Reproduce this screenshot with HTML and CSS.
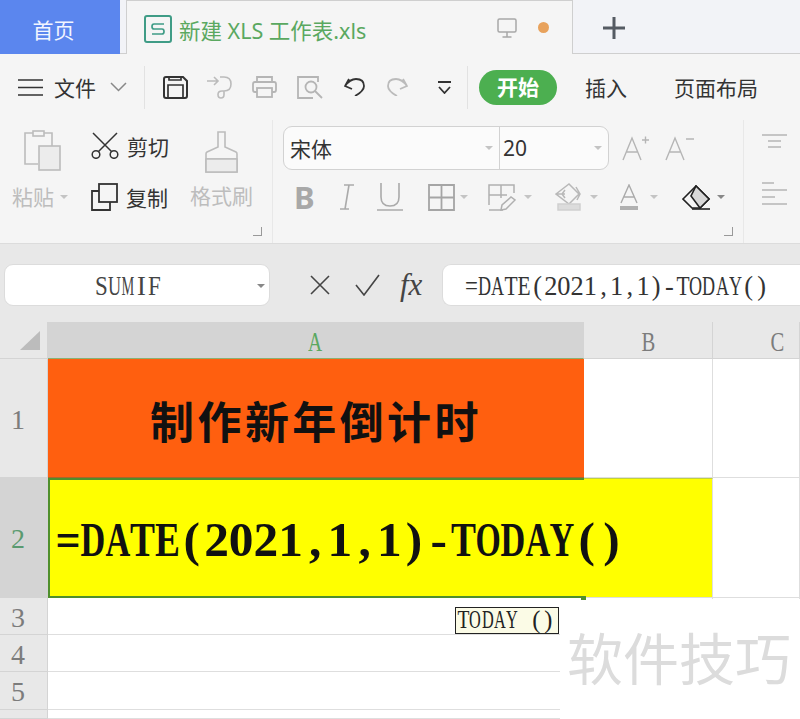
FILE: index.html
```html
<!DOCTYPE html>
<html lang="zh-CN">
<head>
    <meta charset="UTF-8">
    <title>新建 XLS 工作表.xls</title>
    <link rel="stylesheet" href="styles.css">
</head>
<body>
    <!-- window tabs -->
    <div class="tabbar">
        <div class="tab-home">首页</div>
        <div class="tab-doc">
            <svg class="doc-logo" width="28" height="28" viewBox="0 0 28 28" fill="none" stroke="#3f9c86" stroke-width="2"><rect x="1" y="1" width="26" height="26" rx="2"/><path d="M20 9H10q-2 0-2 2.500t2 2.500h8q2 0 2 2.500t-2 2.500H8" stroke-width="1.700"/></svg>
            <span class="doc-name">新建 XLS 工作表.xls</span>
            <svg class="doc-monitor" width="20" height="20" viewBox="0 0 20 20" fill="none" stroke="#a8a8a8" stroke-width="1.500"><rect x="1" y="1" width="18" height="13" rx="1.500"/><path d="M10 14v5M5.500 19h9"/></svg>
            <span class="doc-dot"></span>
        </div>
        <svg class="tab-plus" width="22" height="22" viewBox="0 0 22 22" stroke="#555b63" stroke-width="3"><path d="M11 0v22M0 11h22"/></svg>
    </div>

    <!-- file menu, quick access, ribbon tabs -->
    <div class="menubar">
        <svg class="m-burger" width="25" height="17" viewBox="0 0 25 17" stroke="#333" stroke-width="1.600"><path d="M0 1h25M0 8.500h25M0 16h25"/></svg>
        <span class="m-file">文件</span>
        <svg class="m-chevron" width="17" height="10" viewBox="0 0 17 10" fill="none" stroke="#888" stroke-width="1.500"><path d="M1 1l7.500 7.500L16 1"/></svg>
        <span class="m-sep m-sep-a"></span>
        <svg class="m-save" width="25" height="23" viewBox="0 0 25 23" fill="none" stroke="#333" stroke-width="2"><path d="M3 1h17l4 4v15q0 2-2 2H3q-2 0-2-2V3q0-2 2-2z"/><path d="M5 22V9h15v13M6 1v3h12V1" stroke-width="1.700"/></svg>
        <svg class="m-share" width="25" height="23" viewBox="0 0 25 23" fill="none" stroke="#bbb" stroke-width="1.600"><path d="M0 5h10M7 1l4 4-4 4M13 1h4q7 0 7 7t-7 7h-2q-4 0-4 3.500t3 3.500 3-3.500v-3"/></svg>
        <svg class="m-print" width="25" height="22" viewBox="0 0 25 22" fill="none" stroke="#b5b5b5" stroke-width="1.800"><path d="M5 6V1h15v5M5 16H3q-2 0-2-2V8q0-2 2-2h19q2 0 2 2v6q0 2-2 2h-2"/><rect x="5" y="12" width="15" height="9"/></svg>
        <svg class="m-preview" width="26" height="23" viewBox="0 0 26 23" fill="none" stroke="#b5b5b5" stroke-width="1.800"><path d="M21 6V1H1v21h15"/><circle cx="14" cy="11" r="5.500"/><path d="M18 15l7 7"/></svg>
        <svg class="m-undo" width="21" height="18" viewBox="0 0 21 18" fill="none" stroke="#333" stroke-width="1.800"><path d="M5 1L1 8l7 3M1 8Q6 1 12 1q8 0 8 7 0 5-9 10"/></svg>
        <svg class="m-redo" width="21" height="18" viewBox="0 0 21 18" fill="none" stroke="#bbb" stroke-width="1.800"><path d="M16 1l4 7-7 3M20 8Q15 1 9 1 1 1 1 8q0 5 9 10"/></svg>
        <svg class="m-more" width="15" height="13" viewBox="0 0 15 13" fill="none" stroke="#333" stroke-width="1.800"><path d="M1 1h13M2 6l5.500 6L13 6"/></svg>
        <span class="m-sep m-sep-b"></span>
        <span class="m-start">开始</span>
        <span class="m-tab m-insert">插入</span>
        <span class="m-tab m-layout">页面布局</span>
    </div>

    <!-- ribbon -->
    <div class="ribbon">
        <div class="group group-clip">
            <div class="paste">
                <svg class="paste-icon" width="37" height="41" viewBox="0 0 37 41" fill="none" stroke="#bcbcbc" stroke-width="1.600"><path d="M14 34H1V3h27v13"/><rect x="9" y="1" width="11" height="5" fill="#f5f5f5"/><rect x="15" y="16" width="21" height="24" fill="#ececec"/></svg>
                <span class="paste-label">粘贴<i class="caret caret-light"></i></span>
            </div>
            <div class="cutcopy">
                <div class="small-btn">
                    <svg width="28" height="27" viewBox="0 0 28 27" fill="none" stroke="#333" stroke-width="1.500"><path d="M2 1l19 19M26 1L7 20"/><circle cx="5" cy="22.500" r="3.800"/><circle cx="23" cy="22.500" r="3.800"/></svg>
                    <span>剪切</span>
                </div>
                <div class="small-btn">
                    <svg width="27" height="28" viewBox="0 0 27 28" fill="none" stroke="#333" stroke-width="1.800"><path d="M8 8H1v19h18v-8"/><rect x="8" y="1" width="18" height="18" fill="#f5f5f5"/></svg>
                    <span>复制</span>
                </div>
            </div>
            <div class="brush">
                <svg width="33" height="42" viewBox="0 0 33 42" fill="none" stroke="#bcbcbc" stroke-width="1.600"><path d="M13 1h7v15l11 5q1 .5 1 2v18H1V23q0-1.500 1-2l11-5zM1 28h31"/><path d="M1 28h31v13H1z" fill="#ececec"/></svg>
                <span>格式刷</span>
            </div>
            <span class="launcher"></span>
        </div>

        <div class="group group-font">
            <div class="font-col">
                <div class="font-top">
                    <div class="font-box">
                        <div class="font-name">宋体<i class="caret caret-light"></i></div>
                        <div class="font-size">20<i class="caret caret-light"></i></div>
                    </div>
                    <svg class="grow" width="28" height="26" viewBox="0 0 28 26" fill="none" stroke="#b5b5b5" stroke-width="1.400"><path d="M1 25L10 3l9 22M4.500 17h11M20 5h7M23.500 1.500v7"/></svg>
                    <svg class="shrink" width="30" height="26" viewBox="0 0 30 26" fill="none" stroke="#b5b5b5" stroke-width="1.400"><path d="M1 25L10 3l9 22M4.500 17h11M21 4h8"/></svg>
                </div>
                <div class="font-tools">
                    <b class="t-bold">B</b>
                    <svg class="t-italic" width="16" height="26" viewBox="0 0 16 26" fill="none" stroke="#aaa" stroke-width="1.600"><path d="M5 1h10M1 25h9M10 1L6 25"/></svg>
                    <svg class="t-under" width="26" height="28" viewBox="0 0 26 28" fill="none" stroke="#aaa" stroke-width="1.600"><path d="M4 0v14q0 9 9 9t9-9V0M0 27h26"/></svg>
                    <svg class="t-grid" width="27" height="27" viewBox="0 0 27 27" fill="none" stroke="#a5a5a5" stroke-width="1.800"><path d="M1 1h25v25H1zM13.500 1v25M1 13.500h25"/></svg>
                    <i class="caret caret-light c-grid"></i>
                    <svg class="t-bordpen" width="28" height="27" viewBox="0 0 28 27" fill="none" stroke="#b0b0b0" stroke-width="1.500"><path d="M1 21V1h25v8M1 11h18M13 1v13M1 26h14"/><path d="M13 26l1-5 9-8 4 3-9 9z"/></svg>
                    <i class="caret caret-light c-bordpen"></i>
                    <svg class="t-fill" width="29" height="28" viewBox="0 0 29 28" fill="none" stroke="#b8b8b8" stroke-width="1.500"><path d="M1 11L14 1l10 10-10 10zM1 11h9M10 7l-3 4 3 4M21 4l4 7-3 6"/><path d="M3 21h22v6H3z" fill="#dcdcdc" stroke="#d0d0d0"/></svg>
                    <i class="caret caret-light c-fill"></i>
                    <svg class="t-color" width="20" height="27" viewBox="0 0 20 27" fill="none" stroke="#aaa" stroke-width="1.400"><path d="M2 19L10 1l8 18M5 13h10"/><path d="M1 22h18v4H1z" fill="#b0b0b0" stroke="none"/></svg>
                    <i class="caret caret-light c-color"></i>
                    <svg class="t-eraser" width="29" height="25" viewBox="0 0 29 25" fill="none" stroke="#222" stroke-width="1.600"><path d="M1 14L14 1l13 13-9 9H10z"/><path d="M14 1l13 13-9 9-9-12z" fill="#d8d8d8"/><path d="M10 24h18"/></svg>
                    <i class="caret c-eraser"></i>
                </div>
            </div>
            <span class="launcher"></span>
        </div>

        <div class="group group-align">
            <svg width="25" height="14" viewBox="0 0 25 14" stroke="#b5b5b5" stroke-width="1.500"><path d="M0 1h25M6 7h13M6 13h13"/></svg>
            <svg width="25" height="23" viewBox="0 0 25 23" stroke="#b5b5b5" stroke-width="1.500"><path d="M0 1h12M0 8h25M0 15h13M0 22h25"/></svg>
        </div>
    </div>

    <!-- name box and formula input -->
    <div class="formulabar">
        <div class="name-box"><span class="half">SUMIF</span><i class="caret"></i></div>
        <svg class="f-cancel" width="20" height="20" viewBox="0 0 20 20" stroke="#444" stroke-width="1.600"><path d="M1 1l18 18M19 1L1 19"/></svg>
        <svg class="f-accept" width="25" height="22" viewBox="0 0 25 22" fill="none" stroke="#444" stroke-width="1.600"><path d="M1 11l8 10L24 1"/></svg>
        <span class="f-fx">fx</span>
        <div class="formula-input"><span class="half">=DATE(2021,1,1)-TODAY()</span></div>
    </div>

    <!-- worksheet -->
    <div class="sheet">
        <div class="corner"><span class="corner-mark"></span></div>
        <div class="col-head col-active"><span class="half">A</span></div>
        <div class="col-head"><span class="half">B</span></div>
        <div class="col-head col-cut"><span class="half">C</span></div>

        <div class="row-head"><span class="half">1</span></div>
        <div class="cell cell-title">制作新年倒计时</div>
        <div class="cell"></div>
        <div class="cell"></div>

        <div class="row-head row-active"><span class="half">2</span></div>
        <div class="cell cell-formula"><span class="half big-formula">=DATE(2021,1,1)-TODAY()</span></div>
        <div class="cell cell-yellow"></div>
        <div class="cell"></div>

        <div class="row-head"><span class="half">3</span></div>
        <div class="cell"></div>
        <div class="cell"></div>
        <div class="cell"></div>

        <div class="row-head"><span class="half">4</span></div>
        <div class="cell"></div>
        <div class="cell"></div>
        <div class="cell"></div>

        <div class="row-head"><span class="half">5</span></div>
        <div class="cell"></div>
        <div class="cell"></div>
        <div class="cell"></div>

        <div class="row-head"></div>
        <div class="cell"></div>
        <div class="cell"></div>
        <div class="cell"></div>

        <div class="fill-handle"></div>
        <div class="hint"><span class="half">TODAY ()</span></div>
        <div class="watermark">软件技巧</div>
    </div>

    <script src="script.js"></script>
</body>
</html>
```

FILE: styles.css
```css
html, body {
    margin: 0;
    padding: 0;
}
body {
    width: 800px;
    height: 719px;
    overflow: hidden;
    background-color: #f5f5f5;
    font-family: "Noto Sans", "Noto Sans CJK SC", sans-serif;
    color: #333;
}
svg {
    display: block;
    flex: none;
}

/* small dropdown triangle */
.caret {
    display: inline-block;
    flex: none;
    width: 0;
    height: 0;
    border-left: 4px solid transparent;
    border-right: 4px solid transparent;
    border-top: 4px solid #888;
}
.caret-light {
    border-top-color: #c4c4c4;
}

/* half width serif text, see script.js */
.half {
    display: inline-flex;
    flex: none;
    font-family: "Liberation Serif", serif;
    line-height: 1;
    white-space: pre;
}
.ch {
    display: flex;
    flex: none;
    justify-content: center;
    width: 0.5em;
}
.glyph {
    flex: none;
}

/* ---- tabs ---- */
.tabbar {
    display: flex;
    align-items: stretch;
    height: 54px;
    box-sizing: border-box;
    background-color: #f2f3f7;
    border-bottom: 1px solid #cfcfcf;
}
.tab-home {
    width: 120px;
    box-sizing: border-box;
    padding-right: 13px;
    margin-bottom: -1px;
    background-color: #5b86ee;
    color: #f2f5ff;
    font-size: 21px;
    line-height: 60px;
    text-align: center;
}
.tab-doc {
    display: flex;
    align-items: center;
    width: 447px;
    margin-left: 6px;
    margin-bottom: -1px;
    box-sizing: border-box;
    background-color: #f5f5f5;
    border: 1px solid #cfcfcf;
    border-bottom: none;
}
.doc-logo {
    margin-left: 17px;
    margin-top: 3px;
}
.doc-name {
    width: 188px;
    margin-left: 7px;
    margin-top: 3px;
    font-size: 21.500px;
    color: #5aa860;
    white-space: nowrap;
}
.doc-monitor {
    margin-left: 130px;
}
.doc-dot {
    width: 11px;
    height: 11px;
    margin-left: 21px;
    border-radius: 50%;
    background-color: #e8a25c;
}
.tab-plus {
    margin-left: 30px;
    margin-top: 17px;
}

/* ---- menu row ---- */
.menubar {
    display: flex;
    align-items: center;
    height: 66px;
    padding-left: 18px;
    background-color: #f5f5f5;
}
.m-file {
    width: 44px;
    margin-left: 11px;
    font-size: 21px;
    white-space: nowrap;
}
.m-chevron { margin-left: 12px; }
.m-sep {
    width: 1px;
    height: 43px;
    background-color: #e2e2e2;
}
.m-sep-a { margin-left: 17px; }
.m-save { margin-left: 18px; }
.m-share { margin-left: 19px; }
.m-print { margin-left: 20px; }
.m-preview { margin-left: 20px; }
.m-undo { margin-left: 21px; }
.m-redo { margin-left: 22px; }
.m-more { margin-left: 29px; }
.m-sep-b { margin-left: 15px; }
.m-start {
    width: 78px;
    height: 35px;
    margin-left: 11px;
    border-radius: 18px;
    background-color: #4caf50;
    color: #fff;
    font-size: 21px;
    font-weight: bold;
    line-height: 35px;
    text-align: center;
}
.m-tab {
    font-size: 21px;
    white-space: nowrap;
}
.m-insert { margin-left: 28px; }
.m-layout { margin-left: 47px; }

/* ---- ribbon ---- */
.ribbon {
    display: flex;
    height: 124px;
    box-sizing: border-box;
    background-color: #f5f5f5;
    border-bottom: 1px solid #dcdcdc;
}
.group {
    display: flex;
    box-sizing: border-box;
}
.group-clip {
    width: 273px;
    padding-left: 12px;
    border-right: 1px solid #e8e8e8;
}
.paste {
    display: flex;
    flex-direction: column;
    width: 58px;
    padding-top: 10px;
}
.paste-icon { margin-left: 12px; }
.paste-label {
    margin-top: 13px;
    font-size: 21px;
    line-height: 26px;
    color: #bdbdbd;
    white-space: nowrap;
}
.paste-label .caret {
    margin-left: 6px;
    vertical-align: 6px;
}
.cutcopy {
    display: flex;
    flex-direction: column;
    width: 79px;
    margin-left: 21px;
    padding-top: 12px;
}
.small-btn {
    display: flex;
    align-items: center;
    height: 27px;
    gap: 8px;
    font-size: 21px;
    white-space: nowrap;
}
.small-btn + .small-btn {
    margin-top: 24px;
}
.brush {
    display: flex;
    flex-direction: column;
    align-items: center;
    width: 63px;
    margin-left: 20px;
    padding-top: 11px;
    font-size: 21px;
    line-height: 26px;
    color: #bdbdbd;
    white-space: nowrap;
}
.brush span { margin-top: 10px; }
.launcher {
    flex: none;
    align-self: flex-end;
    width: 8px;
    height: 8px;
    margin-bottom: 7px;
    border-right: 1.500px solid #999;
    border-bottom: 1.500px solid #999;
}
.group-font {
    width: 471px;
    padding-left: 10px;
    border-right: 1px solid #e8e8e8;
}
.font-col {
    width: 441px;
}
.font-top {
    display: flex;
    align-items: center;
    margin-top: 6px;
}
.font-box {
    display: flex;
    width: 326px;
    height: 44px;
    box-sizing: border-box;
    background-color: #fbfbfb;
    border: 1.500px solid #d2d2d2;
    border-radius: 9px;
    font-size: 21px;
}
.font-name, .font-size {
    display: flex;
    align-items: center;
    justify-content: space-between;
    box-sizing: border-box;
}
.font-name {
    width: 216px;
    padding: 0 6px;
    border-right: 1.500px solid #d2d2d2;
}
.font-size {
    flex: 1;
    padding: 0 6px 0 3px;
}
.grow { margin-left: 13px; }
.shrink { margin-left: 15px; }
.font-tools {
    display: flex;
    align-items: center;
    height: 28px;
    margin-top: 13px;
}
.t-bold {
    width: 22px;
    margin-left: 11px;
    font-family: "Noto Sans", sans-serif;
    font-size: 31px;
    line-height: 28px;
    color: #a8a8a8;
}
.t-italic { margin-left: 24px; }
.t-under { margin-left: 22px; }
.t-grid { margin-left: 25px; }
.c-grid { margin-left: 5px; }
.t-bordpen { margin-left: 20px; }
.c-bordpen { margin-left: 8px; }
.t-fill { margin-left: 23px; }
.c-fill { margin-left: 6px; }
.t-color { margin-left: 21px; }
.c-color { margin-left: 11px; }
.t-eraser { margin-left: 24px; }
.c-eraser { margin-left: 6px; }
.group-align {
    flex-direction: column;
    padding: 14px 0 0 18px;
    gap: 34px;
}

/* ---- formula bar ---- */
.formulabar {
    display: flex;
    align-items: center;
    height: 78px;
    box-sizing: border-box;
    padding: 4px 0 0 4px;
    background-color: #e8e8e8;
}
.name-box, .formula-input {
    display: flex;
    align-items: center;
    height: 42px;
    box-sizing: border-box;
    background-color: #fff;
    border: 1px solid #dcdcdc;
    color: #444;
}
.name-box {
    width: 266px;
    justify-content: space-between;
    padding: 2px 4px 0 90px;
    border-radius: 9px;
    font-size: 26.500px;
}
.f-cancel { margin-left: 40px; }
.f-accept { margin-left: 25px; }
.f-fx {
    width: 26px;
    margin-left: 20px;
    font-family: "Liberation Serif", serif;
    font-style: italic;
    font-size: 31px;
    line-height: 40px;
    color: #444;
}
.formula-input {
    flex: 1;
    margin-left: 16px;
    padding: 3px 0 0 22px;
    border-right: none;
    border-radius: 9px 0 0 9px;
    font-size: 26.400px;
    color: #333;
}

/* ---- sheet ---- */
.sheet {
    position: relative;
    display: grid;
    grid-template-columns: 48px 536px 129px 87px;
    grid-template-rows: 37px 119px 120px 37px 37px 38px 9px;
    background-color: #fff;
}
.corner, .col-head, .row-head {
    display: flex;
    align-items: center;
    justify-content: center;
    box-sizing: border-box;
    padding-top: 3px;
    background-color: #e8e8e8;
    color: #7c7c7c;
    font-size: 28px;
    border-right: 1px solid #d4d4d4;
    border-bottom: 1px solid #d4d4d4;
}
.corner {
    justify-content: flex-start;
    padding-top: 0;
    padding-left: 20px;
}
.corner-mark {
    width: 0;
    height: 0;
    border-left: 20px solid transparent;
    border-bottom: 19px solid #bcbcbc;
}
.col-active {
    background-color: #d4d4d4;
    color: #5aa860;
    border-bottom: 1px solid #8cb070;
}
.col-cut {
    justify-content: flex-start;
    padding-left: 57px;
}
.row-head {
    padding-right: 11px;
}
.row-active {
    background-color: #d4d4d4;
    color: #5a9a70;
}
.cell {
    box-sizing: border-box;
    border-right: 1px solid #dedede;
    border-bottom: 1px solid #dedede;
}
.cell-title {
    display: flex;
    align-items: center;
    justify-content: center;
    padding-top: 3px;
    background-color: #ff5f0f;
    border: none;
    border-bottom: 1px solid #a8662a;
    color: #111;
    font-size: 44px;
    font-weight: bold;
    letter-spacing: 3.400px;
}
/* text runs on over column B, so this cell paints above it */
.cell-formula {
    z-index: 1;
    display: flex;
    align-items: center;
    padding: 3px 0 0 6px;
    background-color: #ffff00;
    border: none;
    border-top: 2px solid #4f8f2c;
    border-left: 2px solid #4f8f2c;
    border-bottom: 2px solid #4f8f2c;
    white-space: nowrap;
}
.big-formula {
    font-size: 49.400px;
    font-weight: bold;
    color: #111;
}
.cell-yellow {
    background-color: #ffff00;
    border-top: 1px solid #c0d040;
}

/* things that float over the cells */
.fill-handle {
    position: absolute;
    z-index: 2;
    left: 581px;
    top: 274px;
    width: 5px;
    height: 4px;
    background-color: #4f8f2c;
}
.hint {
    position: absolute;
    left: 455px;
    top: 285px;
    display: flex;
    align-items: center;
    width: 104px;
    height: 27px;
    box-sizing: border-box;
    padding-left: 1px;
    background-color: #fbfbe6;
    border: 1px solid #222;
    font-size: 24.400px;
    color: #222;
}
.watermark {
    position: absolute;
    left: 560px;
    top: 277px;
    width: 240px;
    height: 120px;
    box-sizing: border-box;
    padding: 22px 0 0 7px;
    background-color: #fff;
    color: #dcdcdc;
    font-family: "Noto Sans CJK SC", sans-serif;
    font-size: 56px;
    line-height: 70px;
}
```

FILE: script.js
```js
// Sheet text uses half width latin (one cell per char), so wrap each char
// in a fixed cell and squeeze the glyphs that are wider than it.
document.querySelectorAll('.half').forEach(el => {
    const text = el.textContent;
    el.textContent = '';
    for (const ch of text) {
        const cell = document.createElement('span');
        const glyph = document.createElement('span');
        cell.className = 'ch';
        glyph.className = 'glyph';
        glyph.textContent = ch;
        cell.appendChild(glyph);
        el.appendChild(cell);
        const ratio = cell.offsetWidth / glyph.offsetWidth;
        if (ratio < 1) {
            glyph.style.transform = `scaleX(${ratio})`;
        }
    }
});
```
